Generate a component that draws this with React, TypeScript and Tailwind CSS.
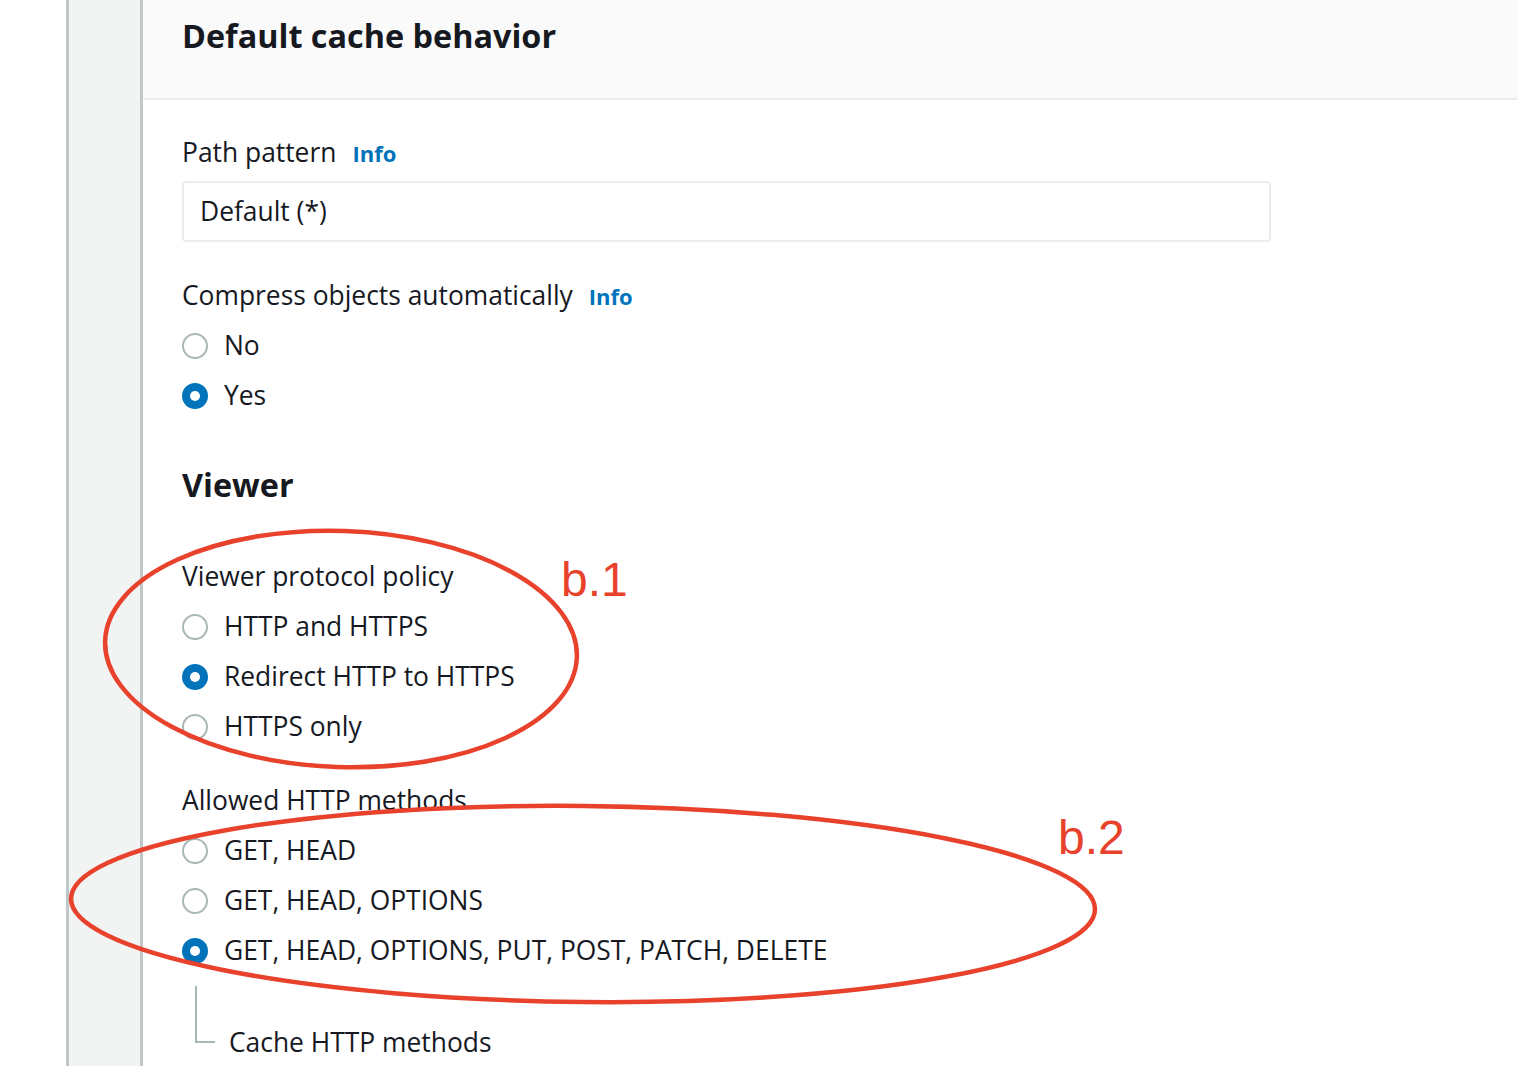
import React from "react";

function Radio({ checked, label }: { checked?: boolean; label: string }) {
  return (
    <div className="flex items-center h-[50px]">
      {checked ? (
        <span className="w-[26px] h-[26px] rounded-full bg-[#0073bb] flex items-center justify-center">
          <span className="w-[10px] h-[10px] rounded-full bg-white" />
        </span>
      ) : (
        <span className="w-[26px] h-[26px] rounded-full border-2 border-[#aab7b8] bg-white" />
      )}
      <span className="ml-[16px] text-[26.4px] text-[#16191f]">{label}</span>
    </div>
  );
}

export default function App() {
  return (
    <div
      className="relative flex w-[1518px] h-[1066px] overflow-hidden bg-white"
      style={{ fontFamily: '"Open Sans", "Noto Sans", sans-serif' }}
    >
      <div className="w-[66px] shrink-0 bg-white" />
      <div className="w-[77px] shrink-0 bg-[#f2f3f3] border-l-[3px] border-r-[3px] border-[#bfc7c8]" />
      <div className="flex-1 flex flex-col">
        <div className="h-[100px] bg-[#fafafa] border-b-2 border-[#eaeded] pl-[39px] pt-[12px]">
          <h1 className="text-[32.4px] leading-[46px] font-bold text-[#16191f]">Default cache behavior</h1>
        </div>
        <div className="pl-[39px] pt-[32px] text-[#16191f]">
          <div className="flex items-baseline text-[26.4px] leading-[40px]">
            <span>Path pattern</span>
            <span className="ml-[16px] text-[22px] font-bold text-[#0073bb]">Info</span>
          </div>
          <div className="mt-[8px] w-[1089px] h-[61px] border-2 border-[#eaeded] rounded-[4px] flex items-center pl-[16px] text-[26.4px]">
            Default (*)
          </div>
          <div className="mt-[33px] mb-[5px] flex items-baseline text-[26.4px] leading-[40px]">
            <span>Compress objects automatically</span>
            <span className="ml-[16px] text-[22px] font-bold text-[#0073bb]">Info</span>
          </div>
          <div>
            <Radio label="No" />
            <Radio checked label="Yes" />
          </div>
          <h2 className="mt-[40px] text-[32.4px] leading-[46px] font-bold">Viewer</h2>
          <div className="mt-[49px] mb-[6px] text-[26.4px] leading-[40px]">Viewer protocol policy</div>
          <div>
            <Radio label="HTTP and HTTPS" />
            <Radio checked label="Redirect HTTP to HTTPS" />
            <Radio label="HTTPS only" />
          </div>
          <div className="mt-[28px] mb-[6px] text-[26.4px] leading-[40px]">Allowed HTTP methods</div>
          <div>
            <Radio label="GET, HEAD" />
            <Radio label="GET, HEAD, OPTIONS" />
            <Radio checked label="GET, HEAD, OPTIONS, PUT, POST, PATCH, DELETE" />
          </div>
          <div className="flex mt-[10px]">
            <div className="ml-[13px] w-[20px] h-[57px] border-l-2 border-b-2 border-[#aab7b8]" />
            <div className="ml-[14px] mt-[36px] text-[26.4px] leading-[40px]">Cache HTTP methods</div>
          </div>
        </div>
      </div>
      <svg className="absolute left-0 top-0 pointer-events-none" width="1518" height="1066" viewBox="0 0 1518 1066">
        <ellipse cx="341" cy="649" rx="236" ry="118" fill="none" stroke="#e8412c" strokeWidth="4.5" transform="rotate(2 341 649)" />
        <ellipse cx="583" cy="904" rx="512" ry="98" fill="none" stroke="#e8412c" strokeWidth="4.5" transform="rotate(0.6 583 904)" />
        <text x="561" y="596" fill="#e8412c" fontSize="48" fontFamily="Liberation Sans, Arial, sans-serif">b.1</text>
        <text x="1058" y="854" fill="#e8412c" fontSize="48" fontFamily="Liberation Sans, Arial, sans-serif">b.2</text>
      </svg>
    </div>
  );
}
